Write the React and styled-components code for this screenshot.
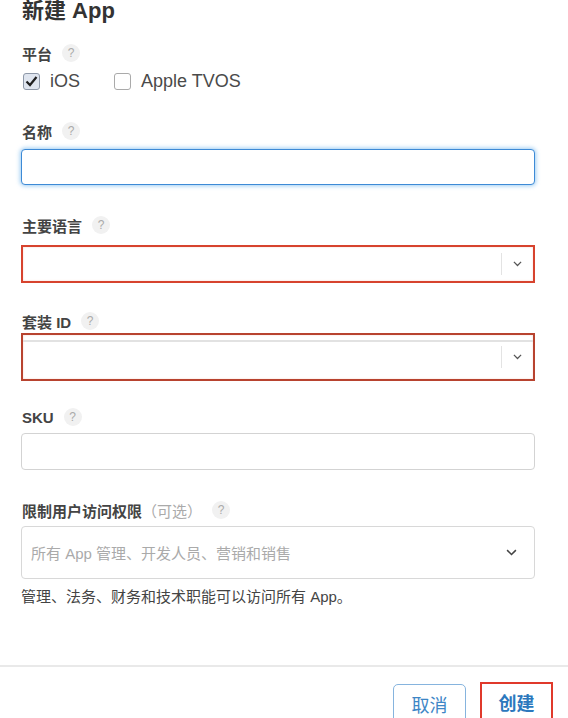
import React from 'react'
import styled, { createGlobalStyle } from 'styled-components'

const Global = createGlobalStyle`
  html, body {
    margin: 0;
    padding: 0;
    background: #fff;
    overflow: hidden;
  }
  body {
    font-family: 'Liberation Sans', 'Noto Sans CJK SC', sans-serif;
    color: #333;
  }
`

const Form = styled.div`
  padding: 0 33px 0 21px;
  display: flex;
  flex-direction: column;
`

const Title = styled.h1`
  margin: 0 0 0 1px;
  font-size: 22px;
  line-height: 22px;
  font-weight: 700;
  color: #333;
`

const Label = styled.div`
  display: flex;
  align-items: center;
  gap: 10px;
  height: 20px;
  margin-top: ${(p) => p.$top}px;
  padding-left: 1px;
  font-size: 15px;
  font-weight: 600;
  color: #444;
`

const Optional = styled.span`
  font-weight: 400;
  color: #aaa;
  margin-left: -10px;
`

const Help = styled.span`
  width: 18px;
  height: 18px;
  border-radius: 50%;
  background: #f1f1f1;
  color: #aaa;
  font-size: 12px;
  font-weight: 400;
  display: flex;
  align-items: center;
  justify-content: center;
`

const Checks = styled.div`
  display: flex;
  align-items: center;
  height: 20px;
  margin-top: 8px;
  padding-left: 2px;
  gap: 34px;
`

const Check = styled.label`
  display: flex;
  align-items: center;
  gap: 10px;
  font-size: 18px;
  color: #4a4a4a;
`

const Box = styled.span`
  width: 15px;
  height: 15px;
  border: 1px solid ${(p) => (p.$on ? '#8e98a8' : '#aaa')};
  border-radius: 3px;
  background: ${(p) => (p.$on ? '#dfe5ef' : '#fff')};
  display: flex;
  align-items: center;
  justify-content: center;
`

const Input = styled.div`
  box-sizing: border-box;
  height: ${(p) => p.$h}px;
  margin-top: ${(p) => p.$top}px;
  border: 1px solid ${(p) => (p.$focus ? '#3d8ad6' : '#d3d3d3')};
  border-radius: 4px;
  box-shadow: ${(p) => (p.$focus ? '0 0 4px 1px rgba(90, 170, 235, 0.6)' : 'none')};
  background: #fff;
`

const Select = styled.div`
  box-sizing: border-box;
  height: ${(p) => p.$h}px;
  margin-top: ${(p) => p.$top}px;
  border: ${(p) => p.$bw}px solid ${(p) => p.$color};
  box-shadow: inset 0 0 2px rgba(230, 120, 100, 0.35);
  background: #fff;
  display: flex;
  align-items: center;
  justify-content: flex-end;
  position: relative;
`

const TopLine = styled.div`
  position: absolute;
  left: 0;
  right: 0;
  top: 5px;
  height: 2px;
  background: #e2e2e2;
`

const Divider = styled.span`
  width: 1px;
  height: 22px;
  background: #e3e3e3;
`

const Chevron = styled.span`
  width: 31px;
  display: flex;
  justify-content: center;
  color: #555;
`

const Menu = styled.div`
  box-sizing: border-box;
  height: 53px;
  margin-top: 6px;
  border: 1px solid #d8d8d8;
  border-radius: 4px;
  display: flex;
  align-items: center;
  justify-content: space-between;
  padding: 0 17px 0 9px;
  font-size: 15px;
  color: #aaa;
  svg {
    color: #444;
  }
`

const Note = styled.div`
  margin-top: 8px;
  height: 20px;
  line-height: 20px;
  font-size: 15px;
  color: #444;
`

const Footer = styled.div`
  margin-top: 58px;
  border-top: 2px solid #e9e9e9;
  display: flex;
  justify-content: flex-end;
  gap: 14px;
  padding: 17px 15px 0 0;
`

const Button = styled.button`
  width: 73px;
  height: 40px;
  box-sizing: border-box;
  background: #fff;
  font-family: 'Noto Sans CJK SC', sans-serif;
  font-size: 18px;
  font-weight: ${(p) => (p.$primary ? 700 : 400)};
  color: ${(p) => (p.$primary ? '#2c78bd' : '#3d86c6')};
  border: ${(p) => (p.$primary ? '2px solid #e0392b' : '1px solid #86b4de')};
  border-radius: ${(p) => (p.$primary ? '0' : '5px')};
  margin-top: ${(p) => (p.$primary ? '-2px' : '0')};
  padding: 0;
`

const Q = () => <Help>?</Help>

const Caret = ({ size = 10 }) => (
  <svg width={size} height={size * 0.6} viewBox='0 0 10 6' fill='none'>
    <path d='M1 1l4 4 4-4' stroke='currentColor' strokeWidth='1.4' />
  </svg>
)

const App = () => {
  return (
    <>
      <Global />
      <Form>
        <Title>新建 App</Title>
        <Label $top={21}>
          平台 <Q />
        </Label>
        <Checks>
          <Check>
            <Box $on>
              <svg width='13' height='11' viewBox='0 0 13 11' fill='none'>
                <path d='M1.5 5.5l3.5 3.5 6.5-8' stroke='#1f1f1f' strokeWidth='2.2' />
              </svg>
            </Box>
            iOS
          </Check>
          <Check>
            <Box />
            Apple TVOS
          </Check>
        </Checks>
        <Label $top={30}>
          名称 <Q />
        </Label>
        <Input $h={36} $top={8} $focus />
        <Label $top={30}>
          主要语言 <Q />
        </Label>
        <Select $h={38} $top={10} $bw={2} $color='#d7432e'>
          <Divider />
          <Chevron>
            <Caret size={9} />
          </Chevron>
        </Select>
        <Label $top={28}>
          套装 ID <Q />
        </Label>
        <Select $h={48} $top={2} $bw={2} $color='#b8432f'>
          <TopLine />
          <Divider />
          <Chevron>
            <Caret size={9} />
          </Chevron>
        </Select>
        <Label $top={26}>
          SKU <Q />
        </Label>
        <Input $h={37} $top={6} />
        <Label $top={30}>
          限制用户访问权限 <Optional>（可选）</Optional> <Q />
        </Label>
        <Menu>
          所有 App 管理、开发人员、营销和销售
          <Caret size={11} />
        </Menu>
        <Note>管理、法务、财务和技术职能可以访问所有 App。</Note>
      </Form>
      <Footer>
        <Button>取消</Button>
        <Button $primary>创建</Button>
      </Footer>
    </>
  )
}

export default App
